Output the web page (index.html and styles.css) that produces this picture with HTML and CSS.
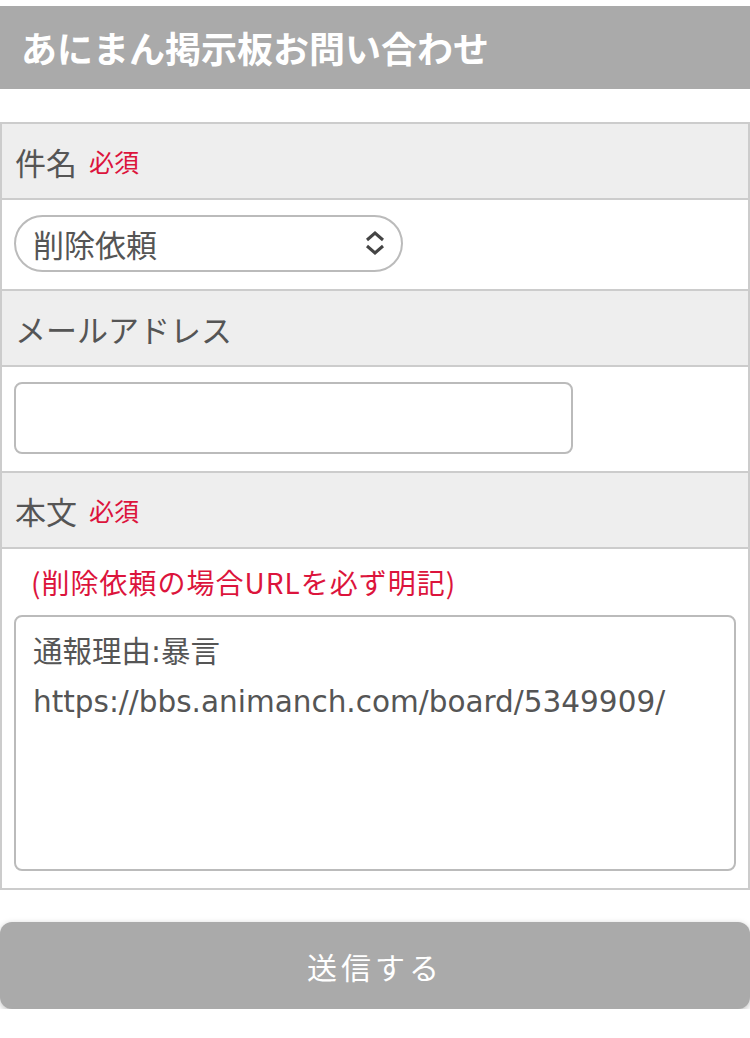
FILE: index.html
```html
<!DOCTYPE html>
<html lang="ja">
<head>
    <meta charset="UTF-8">
    <meta name="viewport" content="width=device-width, initial-scale=1.0">
    <title>あにまん掲示板お問い合わせ</title>
    <link rel="stylesheet" href="styles.css">
</head>
<body>

    <h1 class="page-title">あにまん掲示板お問い合わせ</h1>

    <form class="contact-form">
        <div class="form-box">
            <div class="form-label">件名<span class="required">必須</span></div>
            <div class="form-field">
                <div class="select-wrap">
                    <select class="form-select">
                        <option>削除依頼</option>
                        <option>その他</option>
                    </select>
                    <svg class="select-arrow" width="20" height="26" viewBox="0 0 20 26">
                        <path d="M2 10 L10 3 L18 10 M2 16 L10 23 L18 16" fill="none" stroke="#444" stroke-width="3"/>
                    </svg>
                </div>
            </div>

            <div class="form-label">メールアドレス</div>
            <div class="form-field">
                <input type="email" class="form-input">
            </div>

            <div class="form-label">本文<span class="required">必須</span></div>
            <div class="form-field">
                <p class="note">(削除依頼の場合URLを必ず明記)</p>
                <textarea class="form-textarea">通報理由:暴言
https://bbs.animanch.com/board/5349909/</textarea>
            </div>
        </div>

        <button type="button" class="submit-button">送信する</button>
    </form>

</body>
</html>
```

FILE: styles.css
```css
body {
    margin: 0;
    font-family: "Noto Sans CJK JP", sans-serif;
    color: #555;
    background: #fff;
}

.page-title {
    margin: 6px 0 0;
    height: 83px;
    line-height: 83px;
    padding-left: 21px;
    background: #aaa;
    color: #fff;
    font-size: 36px;
    font-weight: bold;
}

.contact-form {
    margin-top: 33px;
}

.form-box {
    border: 2px solid #ccc;
    border-bottom: none;
}

.form-label {
    display: flex;
    align-items: center;
    height: 74px;
    padding-left: 13px;
    background: #eee;
    border-bottom: 2px solid #ccc;
    font-size: 31px;
}

.required {
    margin-left: 12px;
    color: #dc143c;
    font-size: 25px;
}

.form-field {
    padding: 15px 12px 17px;
    border-bottom: 2px solid #ccc;
    background: #fff;
}

.select-wrap {
    position: relative;
    width: 389px;
}

.form-select {
    appearance: none;
    -webkit-appearance: none;
    display: block;
    width: 100%;
    height: 57px;
    padding: 0 17px;
    border: 2px solid #bbb;
    border-radius: 30px;
    background: #fff;
    color: #555;
    font-family: "Noto Sans CJK JP", sans-serif;
    font-size: 31px;
}

.select-arrow {
    position: absolute;
    right: 18px;
    top: 15px;
}

.form-input {
    display: block;
    width: 559px;
    height: 72px;
    box-sizing: border-box;
    border: 2px solid #bbb;
    border-radius: 8px;
    background: #fff;
}

.note {
    margin: 0 0 15px;
    padding-left: 17px;
    line-height: 36px;
    color: #dc143c;
    font-size: 28px;
    letter-spacing: 1px;
}

.form-textarea {
    display: block;
    width: 722px;
    height: 256px;
    box-sizing: border-box;
    padding: 10px 17px;
    border: 2px solid #bbb;
    border-radius: 8px;
    resize: none;
    color: #555;
    font-family: "DejaVu Sans", "Noto Sans CJK JP", sans-serif;
    font-size: 29.5px;
    line-height: 50px;
}

.submit-button {
    display: block;
    width: 100%;
    height: 87px;
    margin-top: 32px;
    border: none;
    border-radius: 12px;
    background: #aaa;
    box-shadow: 0 2px 6px rgba(0, 0, 0, 0.25);
    color: #fff;
    font-family: "Noto Sans CJK JP", sans-serif;
    font-size: 30px;
    letter-spacing: 4px;
}
```
